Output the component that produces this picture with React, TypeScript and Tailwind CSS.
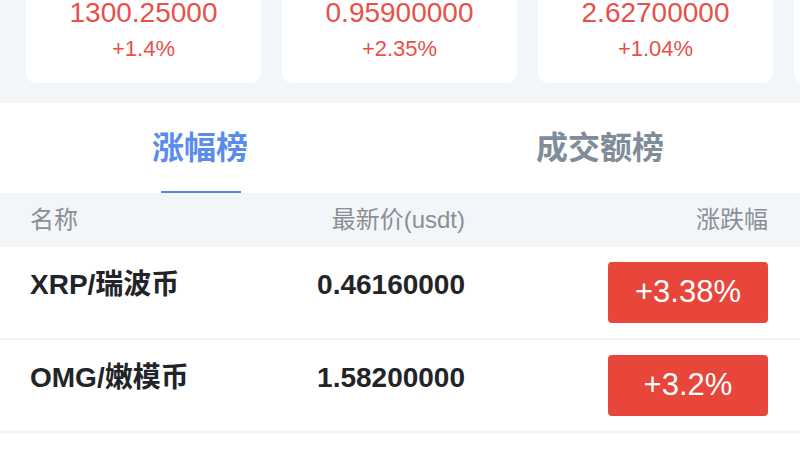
const cards = [
  { price: "1300.25000", change: "+1.4%" },
  { price: "0.95900000", change: "+2.35%" },
  { price: "2.62700000", change: "+1.04%" },
  { price: "0.31200000", change: "+0.87%" },
];

const rows = [
  { name: "XRP/瑞波币", price: "0.46160000", change: "+3.38%" },
  { name: "OMG/嫩模币", price: "1.58200000", change: "+3.2%" },
];

const font = { fontFamily: '"Liberation Sans", "Noto Sans CJK SC", sans-serif' };

export default function App() {
  return (
    <div className="w-[800px] h-[450px] overflow-hidden bg-white" style={font}>
      <div className="h-[103px] overflow-hidden bg-[#f3f6f9]">
        <div className="flex gap-[21px] pl-[26px] -mt-[40px]">
          {cards.map((c) => (
            <div
              key={c.price}
              className="w-[235px] shrink-0 h-[123px] rounded-[10px] bg-white flex flex-col items-center pt-[36px]"
            >
              <div className="text-[28px] leading-[34px] text-[#e8504a]">{c.price}</div>
              <div className="text-[22px] leading-[30px] mt-[4px] text-[#e8504a]">{c.change}</div>
            </div>
          ))}
        </div>
      </div>

      <div className="flex h-[90px]">
        <div className="flex-1 flex flex-col items-center">
          <div className="pt-[25px] text-[32px] leading-[40px] font-bold text-[#5a8cee]">涨幅榜</div>
          <div className="mt-auto w-[80px] h-[2px] ml-[1px] bg-[#5b86d6]" />
        </div>
        <div className="flex-1 flex flex-col items-center">
          <div className="pt-[25px] text-[32px] leading-[40px] font-bold text-[#7f8c99]">成交额榜</div>
        </div>
      </div>

      <div className="grid grid-cols-[195px_240px_1fr] items-center h-[54px] pl-[30px] pr-[32px] bg-[#f3f6f9] text-[24px] text-[#8a8f96]">
        <div>名称</div>
        <div className="text-right">最新价(usdt)</div>
        <div className="text-right">涨跌幅</div>
      </div>

      {rows.map((r) => (
        <div
          key={r.name}
          className="grid grid-cols-[195px_240px_1fr] items-center h-[93px] pl-[30px] pr-[32px] border-b-2 border-[#eef0f3]"
        >
          <div className="pb-[16px] text-[28px] font-bold text-[#222428] whitespace-nowrap">{r.name}</div>
          <div className="pb-[16px] text-right text-[28px] font-bold text-[#222428]">{r.price}</div>
          <div className="flex justify-end">
            <div className="w-[160px] h-[61px] rounded-[4px] bg-[#e8453b] text-white text-[31px] flex items-center justify-center">
              {r.change}
            </div>
          </div>
        </div>
      ))}
    </div>
  );
}
